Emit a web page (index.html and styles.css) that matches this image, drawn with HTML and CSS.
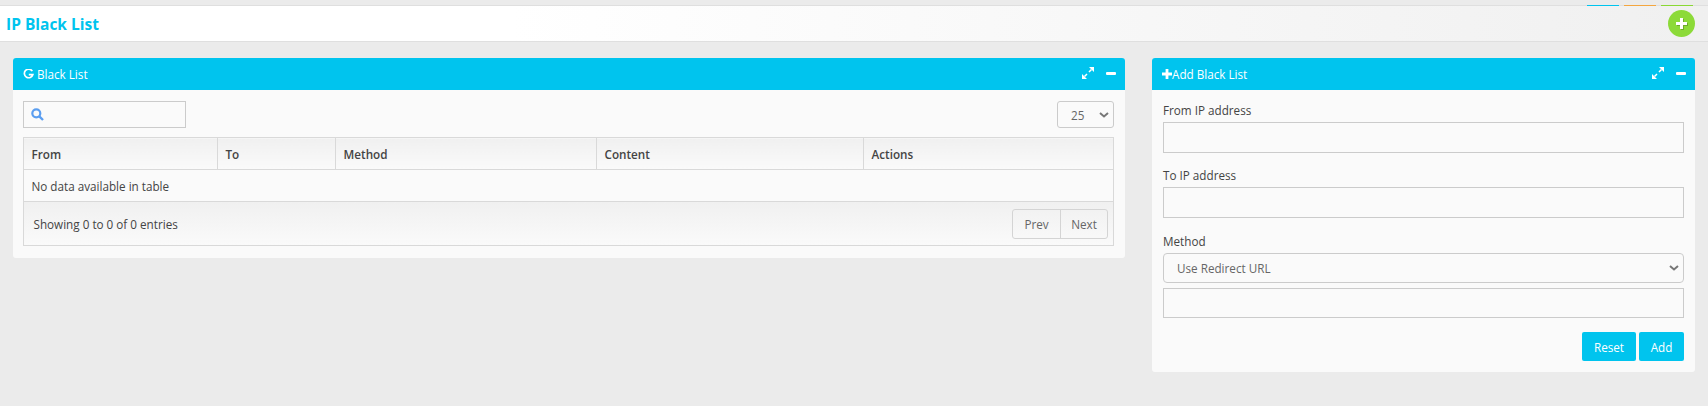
FILE: index.html
```html
<!DOCTYPE html>
<html lang="en">
<head>
<meta charset="utf-8">
<title>IP Black List</title>
<link rel="stylesheet" href="styles.css">
</head>
<body>
<div class="topbar">
  <div class="tabs"><span class="tab tab-blue"></span><span class="tab tab-orange"></span><span class="tab tab-green"></span></div>
</div>
<header class="pagehead">
  <h1 class="title">IP Black List</h1>
  <button class="fab" aria-label="Add"><svg width="14" height="14" viewBox="0 0 14 14"><path class="fab-shadow" d="M6 2h3v4h4v3H9v4H6V9H2V6h4z"/><path class="fab-plus" d="M5 1h3v4h4v3H8v4H5V8H1V5h4z"/></svg></button>
</header>
<main class="columns">
  <section class="panel panel-left">
    <div class="panel-head">
      <span class="panel-title"><svg class="g-icon" width="11" height="11" viewBox="0 0 11 11"><path d="M9.300 2.100A4.300 4.300 0 1 0 9.800 5.700H5.800" fill="none" stroke="#fff" stroke-width="1.700"/></svg>Black List</span>
      <span class="panel-tools">
        <svg width="12" height="12" viewBox="0 0 12 12"><path d="M7 0h5v5zM5 12H0V7z" fill="#fff"/><path d="M9.500 2.500L7 5M5 7L2.500 9.500" stroke="#fff" stroke-width="1.500"/></svg>
        <span class="minus"></span>
      </span>
    </div>
    <div class="panel-body body-left">
      <div class="controls">
        <label class="search"><svg width="13" height="13" viewBox="0 0 13 13"><circle cx="5.300" cy="5.300" r="4" fill="none" stroke="#5b9ef0" stroke-width="2.200"/><path d="M8.300 8.300l3.700 3.700" stroke="#5b9ef0" stroke-width="2.400"/></svg></label>
        <div class="length"><span>25</span><svg class="chev" width="10" height="6" viewBox="0 0 10 6"><path d="M1 1l4 3.500L9 1" fill="none" stroke="#777" stroke-width="2"/></svg></div>
      </div>
      <table class="grid">
        <thead>
          <tr><th class="c1">From</th><th class="c2">To</th><th class="c3">Method</th><th class="c4">Content</th><th>Actions</th></tr>
        </thead>
        <tbody>
          <tr><td colspan="5">No data available in table</td></tr>
        </tbody>
      </table>
      <div class="tfoot">
        <span class="info">Showing 0 to 0 of 0 entries</span>
        <div class="pager"><span class="pg">Prev</span><span class="pg">Next</span></div>
      </div>
    </div>
  </section>
  <section class="panel panel-right">
    <div class="panel-head">
      <span class="panel-title panel-title-add"><svg width="10" height="10" viewBox="0 0 10 10"><path d="M3.600 0h2.800v3.600H10v2.800H6.400V10H3.600V6.400H0V3.600h3.600z" fill="#fff"/></svg>Add Black List</span>
      <span class="panel-tools">
        <svg width="12" height="12" viewBox="0 0 12 12"><path d="M7 0h5v5zM5 12H0V7z" fill="#fff"/><path d="M9.500 2.500L7 5M5 7L2.500 9.500" stroke="#fff" stroke-width="1.500"/></svg>
        <span class="minus"></span>
      </span>
    </div>
    <form class="panel-body body-right">
      <label class="lbl">From IP address</label>
      <div class="inp"></div>
      <label class="lbl lbl-next">To IP address</label>
      <div class="inp"></div>
      <label class="lbl lbl-next lbl-method">Method</label>
      <div class="sel"><span>Use Redirect URL</span><svg class="chev" width="10" height="6" viewBox="0 0 10 6"><path d="M1 1l4 3.500L9 1" fill="none" stroke="#777" stroke-width="2"/></svg></div>
      <div class="inp inp-url"></div>
      <div class="actions"><span class="btn btn-reset">Reset</span><span class="btn btn-add">Add</span></div>
    </form>
  </section>
</main>
</body>
</html>
```
FILE: styles.css
```css
* { box-sizing: border-box; }
html, body { margin: 0; height: 406px; overflow: hidden; }
body { background: #ebebeb; font-family: "Open Sans", sans-serif; font-size: 11.7px; color: #444; }
.topbar { height: 6px; background: #ebebeb; box-shadow: inset 0 -1px #dfdfdf; display: flex; justify-content: flex-end; padding-right: 15px; }
.tabs { display: flex; gap: 5px; align-items: flex-end; }
.tab { width: 32px; height: 1px; }
.tab-blue { background: #00c4ee; }
.tab-orange { background: #f4a63f; }
.tab-green { background: #8ad834; }
.pagehead { height: 36px; border-bottom: 1px solid #dfdfdf; background: linear-gradient(to right, #fff 0%, #fff 30%, #f0f0f0 100%); display: flex; align-items: center; justify-content: space-between; padding: 0 13px 0 6px; }
.title { margin: 0; font-size: 15.5px; line-height: 22px; font-weight: 700; color: #00c4ee; }
.fab { width: 27px; height: 27px; padding: 0; border: 0; border-radius: 50%; background: #8cda38; display: flex; align-items: center; justify-content: center; }
.fab-plus { fill: #fff; }
.fab-shadow { fill: #6da92c; }
.columns { display: flex; align-items: flex-start; padding: 16px 13px 0; justify-content: space-between; }
.panel { background: #fafafa; border-radius: 3px; overflow: hidden; }
.panel-left { width: 1112px; }
.panel-right { width: 543px; }
.panel-head { height: 32px; background: #00c4ee; color: #fff; display: flex; align-items: center; justify-content: space-between; padding: 0 9px 0 10px; }
.panel-title { display: flex; align-items: center; gap: 3px; }
.panel-title-add { gap: 0; }
.panel-tools { display: flex; align-items: center; gap: 12px; position: relative; top: -1px; }
.minus { width: 10px; height: 3px; background: #fff; border-radius: 1px; }
.body-left { padding: 11px 11px 12px 10px; }
.controls { display: flex; justify-content: space-between; height: 27px; }
.search { width: 163px; height: 27px; border: 1px solid #cbcbcb; display: flex; align-items: center; padding-left: 7px; }
.length { width: 57px; height: 27px; border: 1px solid #cbcbcb; border-radius: 3px; display: flex; align-items: center; justify-content: space-between; padding: 0 4px 0 13px; color: #666; }
.grid { width: 100%; margin-top: 9px; border-collapse: collapse; table-layout: fixed; font-size: 11.7px; }
.grid th, .grid td { border: 1px solid #d9d9d9; padding: 1px 7.5px 0; height: 32px; text-align: left; }
.grid th { font-weight: 600; color: #444; background: linear-gradient(to bottom, #f0f0f0, #fafafa); }
.c1 { width: 194px; }
.c2 { width: 118px; }
.c3 { width: 261px; }
.c4 { width: 267px; }
.tfoot { height: 44px; border: 1px solid #d9d9d9; border-top: 0; background: linear-gradient(to bottom, #f0f0f0, #fafafa); display: flex; align-items: center; justify-content: space-between; padding: 0 5px 0 9.5px; }
.pager { display: flex; border: 1px solid #d4d4d4; border-radius: 3px; height: 30px; }
.pg { display: flex; align-items: center; justify-content: center; color: #666; width: 47px; }
.pg + .pg { border-left: 1px solid #d4d4d4; }
.body-right { display: flex; flex-direction: column; padding: 10px 11px 11px; }
.lbl { height: 22px; line-height: 20px; color: #444; }
.lbl-next { margin-top: 12px; }
.lbl-method { margin-top: 13px; }
.inp { height: 31px; border: 1px solid #cbcbcb; }
.sel { height: 30px; border: 1px solid #cbcbcb; border-radius: 4px; display: flex; align-items: center; justify-content: space-between; padding: 0 4px 0 13px; color: #666; }
.inp-url { margin-top: 5px; height: 30px; }
.actions { display: flex; justify-content: flex-end; gap: 3px; margin-top: 14px; }
.btn { height: 29px; background: #00c4ee; color: #fff; border-radius: 2px; display: flex; align-items: center; justify-content: center; }
.btn-reset { width: 54px; }
.btn-add { width: 45px; }
```
